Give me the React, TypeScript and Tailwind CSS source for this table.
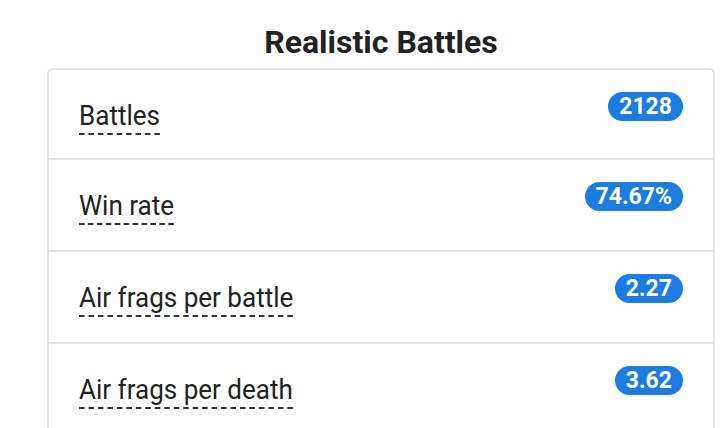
import React from "react";

const rows = [
  { label: "Battles", value: "2128" },
  { label: "Win rate", value: "74.67%" },
  { label: "Air frags per battle", value: "2.27" },
  { label: "Air frags per death", value: "3.62" },
];

export default function App() {
  return (
    <div
      className="w-[720px] h-[428px] overflow-hidden bg-white text-[#222]"
      style={{ fontFamily: "Roboto, 'Liberation Sans', sans-serif" }}
    >
      <div className="ml-[47px] w-[668px]">
        <div className="pt-[24px] pb-[8px] text-center text-[32px] leading-[36px] font-bold text-[#222]">
          Realistic Battles
        </div>
        <div className="border-2 border-[#e2e2e2] rounded-[6px]">
          {rows.map((r, i) => (
            <div
              key={r.label}
              className={
                "px-[30px] pt-[22px] flex items-start justify-between " +
                (i > 0 ? "h-[92px] border-t-2 border-[#e2e2e2]" : "h-[88px]")
              }
            >
              <span className="mt-[7px] origin-left scale-x-[0.93] text-[28px] leading-[34px] border-b-2 border-dashed border-[#333] whitespace-nowrap">
                {r.label}
              </span>
              <span className="h-[29px] px-[11px] rounded-full bg-[#1c7ce0] text-white font-bold text-[23px] leading-[29px]">
                {r.value}
              </span>
            </div>
          ))}
        </div>
      </div>
    </div>
  );
}
